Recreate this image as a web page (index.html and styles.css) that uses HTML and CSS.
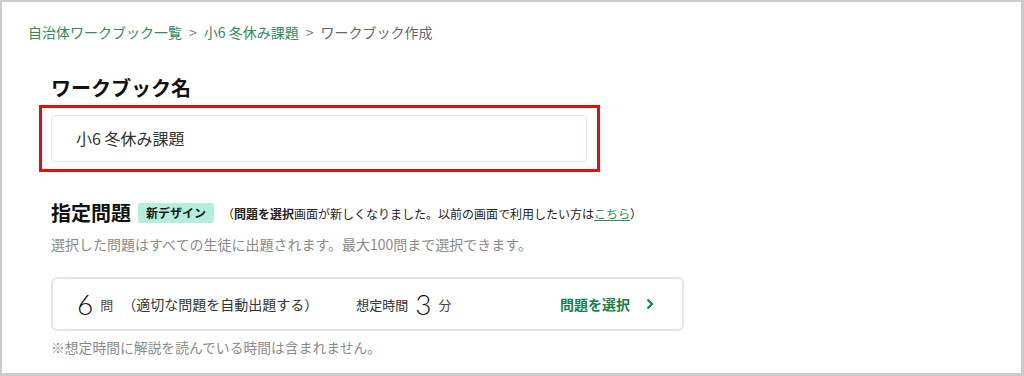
FILE: index.html
```html
<!DOCTYPE html>
<html lang="ja">
<head>
<meta charset="utf-8">
<link rel="stylesheet" href="styles.css">
</head>
<body>
    <div class="frame">
        <nav class="crumbs">
            <a class="crumb-link">自治体ワークブック一覧</a><span class="sep">&gt;</span><a class="crumb-link">小6 冬休み課題</a><span class="sep">&gt;</span><span class="crumb-current">ワークブック作成</span>
        </nav>

        <div class="form">
            <h2 class="label">ワークブック名</h2>
            <div class="highlight">
                <div class="name-input">小6 冬休み課題</div>
            </div>

            <div class="section-head">
                <h2 class="section-title">指定問題</h2>
                <span class="badge">新デザイン</span>
                <span class="notice">（<b>問題を選択</b>画面が新しくなりました。以前の画面で利用したい方は<a class="notice-link">こちら</a>）</span>
            </div>
            <p class="desc">選択した問題はすべての生徒に出題されます。最大100問まで選択できます。</p>

            <div class="card">
                <span class="big-num">6</span><span class="unit">問</span>
                <span class="auto">（適切な問題を自動出題する）</span>
                <span class="time-label">想定時間</span><span class="big-num">3</span><span class="unit">分</span>
                <a class="pick">問題を選択
                    <svg width="8" height="12" viewBox="0 0 8 12"><path d="M1.5 1.5 L6 6 L1.5 10.5" fill="none" stroke="#17804a" stroke-width="2.2"/></svg>
                </a>
            </div>
            <p class="note">※想定時間に解説を読んでいる時間は含まれません。</p>
        </div>
    </div>
</body>
</html>
```

FILE: styles.css
```css
html, body {
    margin: 0;
    padding: 0;
    background: #fff;
}
body {
    font-family: "Noto Sans CJK JP", "Noto Sans", sans-serif;
    color: #222;
}
.frame {
    box-sizing: border-box;
    width: 1024px;
    height: 376px;
    border: 2px solid #cbcbcb;
    border-right-width: 3px;
    border-bottom-width: 3px;
    overflow: hidden;
}
.crumbs {
    padding: 20px 26px 0;
    font-size: 14px;
    line-height: 20px;
    color: #666;
}
.crumb-link {
    color: #2f8a60;
}
.sep {
    margin: 0 7px;
    color: #777;
}
.crumb-current {
    color: #666;
}
.form {
    padding-left: 49px;
}
.label {
    margin: 33px 0 4px;
    font-size: 20px;
    line-height: 26px;
    font-weight: bold;
    color: #111;
}
.highlight {
    width: 538px;
    margin-left: -12px;
    padding: 7px 8px 7px 9px;
    border: 3px solid #e50b12;
}
.name-input {
    box-sizing: border-box;
    width: 536px;
    height: 47px;
    border: 1.5px solid #dfe6ec;
    border-radius: 4px;
    padding-left: 24px;
    font-size: 16px;
    line-height: 44px;
    color: #333;
}
.section-head {
    display: flex;
    align-items: center;
    height: 24px;
    margin-top: 29px;
}
.section-title {
    margin: 0;
    font-size: 20px;
    line-height: 24px;
    font-weight: bold;
    color: #111;
}
.badge {
    margin-left: 7px;
    height: 20px;
    padding: 0 8px;
    border-radius: 2px;
    background: #b3efdc;
    font-size: 12px;
    line-height: 20px;
    font-weight: bold;
    color: #1a1a1a;
}
.notice {
    margin-left: 8px;
    font-size: 12px;
    color: #222;
}
.notice-link {
    color: #2f8a60;
    text-decoration: underline;
}
.desc {
    margin: 9px 0 0;
    font-size: 14px;
    line-height: 20px;
    color: #8a8a8a;
}
.card {
    box-sizing: border-box;
    display: flex;
    align-items: center;
    width: 633px;
    height: 54px;
    margin-top: 23px;
    padding: 0 28px 0 24px;
    border: 2px solid #e1e7ec;
    border-radius: 6px;
    font-size: 14px;
    color: #333;
}
.big-num {
    font-family: Lato, "Noto Sans", sans-serif;
    font-weight: 300;
    font-size: 28px;
    color: #111;
    margin-right: 7px;
}
.unit {
    font-size: 13px;
    color: #444;
}
.auto {
    margin-left: 9px;
    margin-right: 38px;
}
.time-label {
    font-size: 13px;
    margin-right: 7px;
}
.pick {
    margin-left: auto;
    display: flex;
    align-items: center;
    gap: 16px;
    font-size: 14px;
    font-weight: bold;
    color: #17804a;
}
.note {
    margin: 6px 0 0;
    font-size: 13.8px;
    line-height: 20px;
    color: #8a8a8a;
}
```
